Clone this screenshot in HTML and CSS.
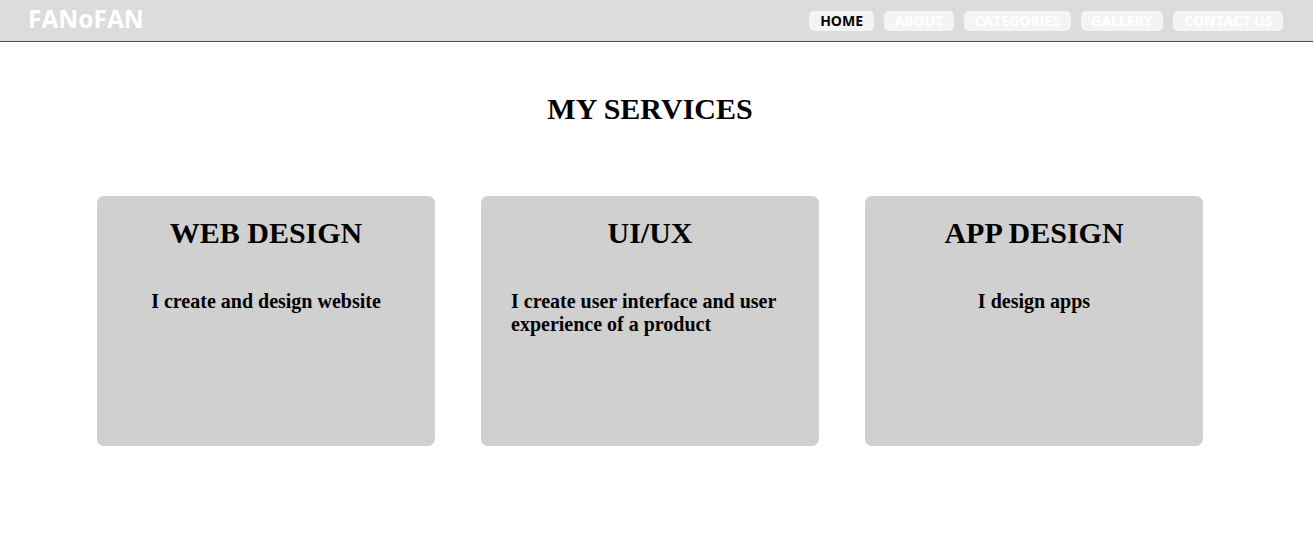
FILE: index.html
```html
<!DOCTYPE html>
<html lang="en">
<head>
<meta charset="utf-8">
<title>FANoFAN</title>
<link rel="stylesheet" href="styles.css">
</head>
<body>
<header class="topbar">
  <div class="logo">FANoFAN</div>
  <nav class="nav">
    <a class="nav-btn active" href="#">HOME</a>
    <a class="nav-btn" href="#">ABOUT</a>
    <a class="nav-btn" href="#">CATEGORIES</a>
    <a class="nav-btn" href="#">GALLERY</a>
    <a class="nav-btn" href="#">CONTACT US</a>
  </nav>
</header>
<main class="services">
  <h1 class="services-title">MY SERVICES</h1>
  <div class="cards">
    <div class="card">
      <h2 class="card-title">WEB DESIGN</h2>
      <p class="card-text">I create and design website</p>
    </div>
    <div class="card">
      <h2 class="card-title">UI/UX</h2>
      <p class="card-text">I create user interface and user experience of a product</p>
    </div>
    <div class="card">
      <h2 class="card-title">APP DESIGN</h2>
      <p class="card-text">I design apps</p>
    </div>
  </div>
</main>
</body>
</html>
```
FILE: styles.css
```css
* { box-sizing: border-box; }
html, body { margin: 0; padding: 0; background: #fff; }
body { font-family: "Liberation Serif", "Times New Roman", serif; color: #000; }

.topbar {
  height: 42px;
  background: #dcdcdc;
  border-bottom: 1px solid #4a4a4a;
  display: flex;
  align-items: center;
  justify-content: space-between;
  padding: 0 30px 0 28px;
}
.logo {
  font-family: "Open Sans", sans-serif;
  font-weight: 700;
  font-size: 24.5px;
  color: #fff;
  line-height: 1;
  margin-top: -2px;
}
.nav { display: flex; gap: 10px; margin-top: 1px; }
.nav-btn {
  font-family: "Open Sans", sans-serif;
  font-weight: 700;
  font-size: 14px;
  line-height: 20px;
  height: 20px;
  padding: 0 10.7px;
  background: #f4f4f4;
  color: #fff;
  border-radius: 5px;
  text-decoration: none;
}
.nav-btn.active { color: #000; }

.services { padding: 0 13px 0 0; text-align: center; }
.services-title {
  font-size: 30px;
  font-weight: 700;
  margin: 0;
  padding-top: 50px;
  line-height: 34px;
}
.cards {
  display: flex;
  justify-content: center;
  gap: 46px;
  margin-top: 70px;
}
.card {
  width: 338px;
  height: 250px;
  background: #d0d0d0;
  border-radius: 7px;
  padding: 20px 30px 0;
  text-align: center;
}
.card-title {
  font-size: 30px;
  font-weight: 700;
  margin: 0;
  line-height: 33px;
}
.card-text {
  display: inline-block;
  text-align: left;
  font-size: 20px;
  font-weight: 700;
  line-height: 23px;
  margin: 41px 0 0;
}
```
